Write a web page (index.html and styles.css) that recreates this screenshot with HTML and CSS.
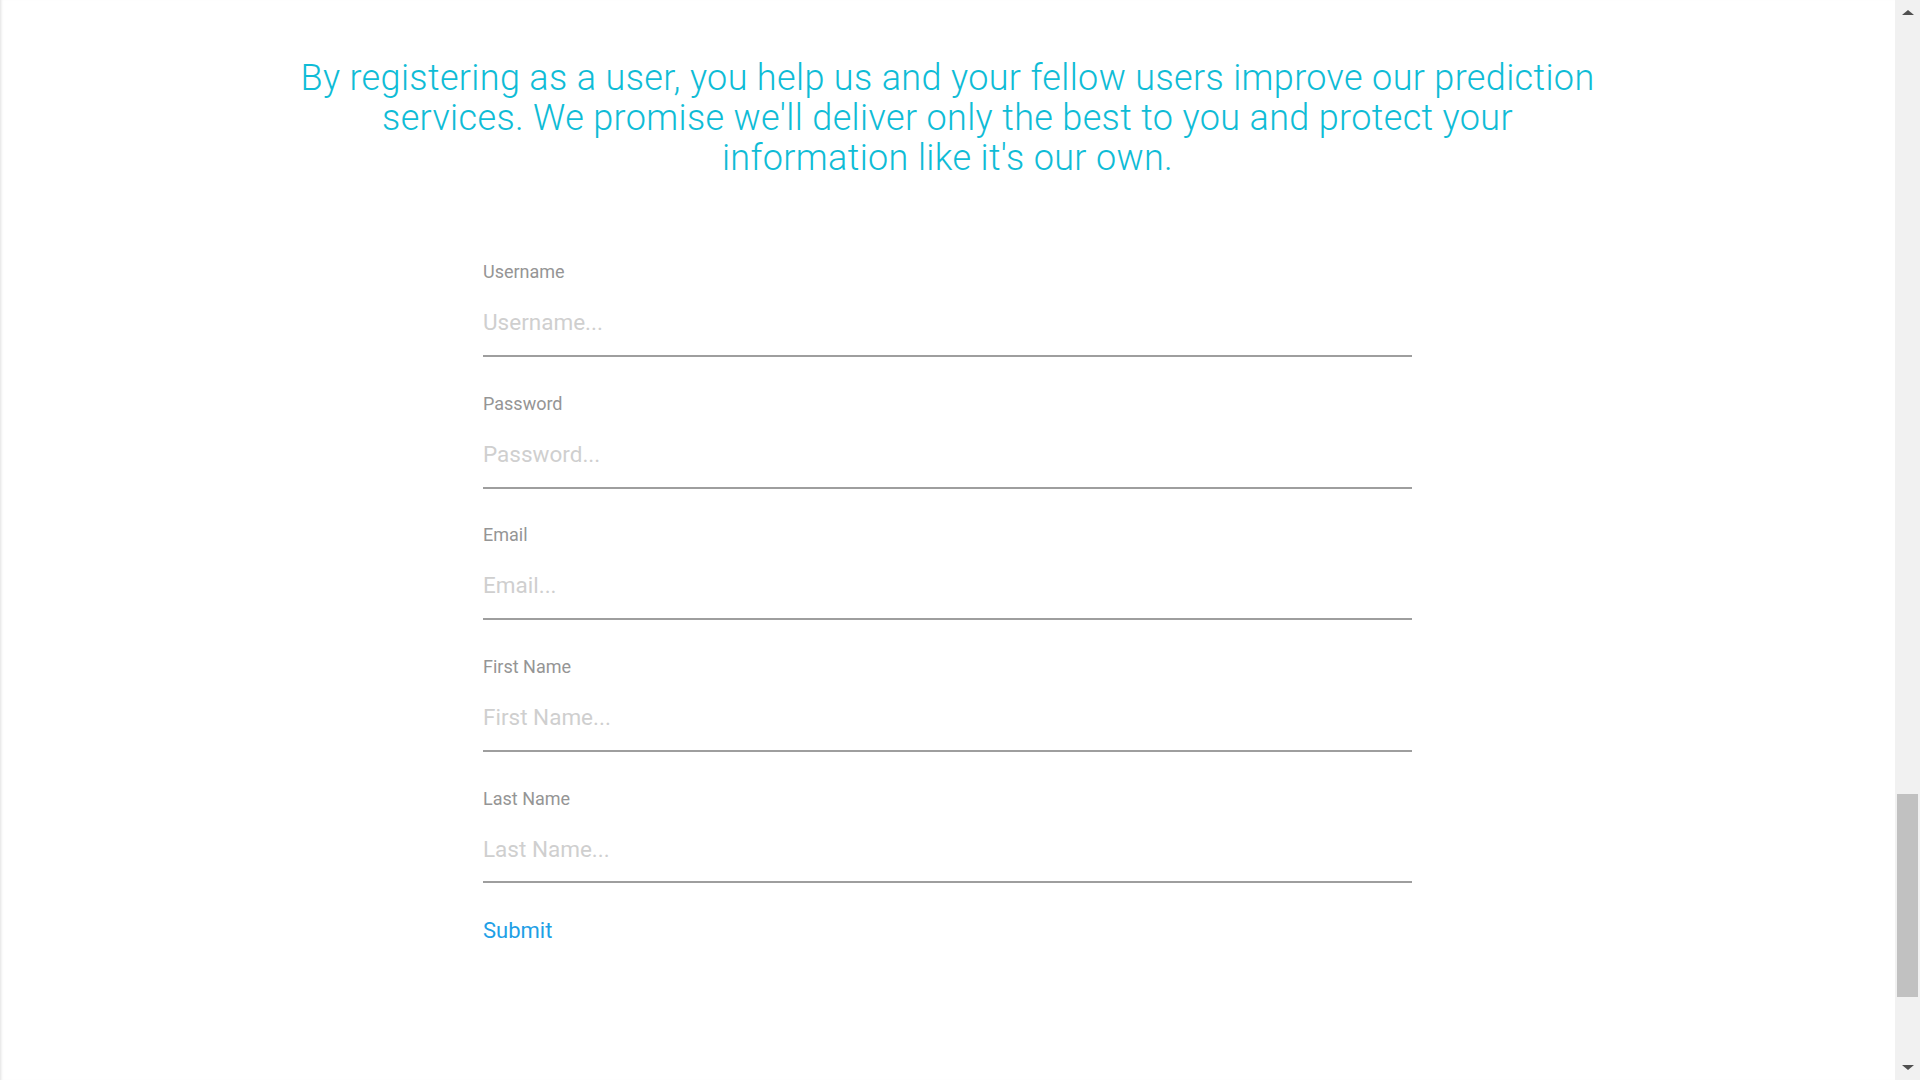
FILE: index.html
```html
<!DOCTYPE html>
<html lang="en">
<head>
<meta charset="utf-8">
<title>Register</title>
<link rel="stylesheet" href="styles.css">
</head>
<body>
<div class="page">
  <main class="main">
    <h1 class="intro">By registering as a user, you help us and your fellow users improve our prediction services. We promise we'll deliver only the best to you and protect your information like it's our own.</h1>
    <form class="form">
      <div class="field">
        <label class="label" for="username">Username</label>
        <input class="input" id="username" type="text" placeholder="Username...">
      </div>
      <div class="field">
        <label class="label" for="password">Password</label>
        <input class="input" id="password" type="password" placeholder="Password...">
      </div>
      <div class="field">
        <label class="label" for="email">Email</label>
        <input class="input" id="email" type="text" placeholder="Email...">
      </div>
      <div class="field">
        <label class="label" for="first">First Name</label>
        <input class="input" id="first" type="text" placeholder="First Name...">
      </div>
      <div class="field">
        <label class="label" for="last">Last Name</label>
        <input class="input" id="last" type="text" placeholder="Last Name...">
      </div>
      <button class="submit" type="button">Submit</button>
    </form>
  </main>
  <div class="scrollbar">
    <div class="arrow arrow-up"></div>
    <div class="track">
      <div class="thumb"></div>
    </div>
    <div class="arrow arrow-down"></div>
  </div>
</div>
</body>
</html>
```
FILE: styles.css
```css
html, body {
  margin: 0;
  padding: 0;
  height: 100%;
  overflow: hidden;
  background: #ffffff;
}

body {
  font-family: "Roboto", "Liberation Sans", sans-serif;
}

.page {
  display: flex;
  height: 1080px;
}

.main {
  flex: 1;
  min-width: 0;
  padding-top: 58px;
  box-shadow: inset 3px 0 3px -2px rgba(0, 0, 0, 0.12);
}

.intro {
  margin: 0 auto;
  max-width: 1298px;
  font-size: 36px;
  line-height: 40px;
  font-weight: 300;
  letter-spacing: 0.35px;
  color: #0fbcd6;
  text-align: center;
}

.form {
  width: 929px;
  margin: 0 auto;
  padding-top: 84.15px;
  display: flex;
  flex-direction: column;
  gap: 36.8px;
}

.field {
  display: flex;
  flex-direction: column;
}

.label {
  font-size: 18px;
  line-height: 20px;
  color: #959595;
}

.input {
  display: block;
  width: 100%;
  box-sizing: content-box;
  height: 26px;
  margin: 0;
  padding: 27px 0 19.8px;
  border: none;
  border-bottom: 2px solid #9e9e9e;
  outline: none;
  background: transparent;
  font-family: "Roboto", "Liberation Sans", sans-serif;
  font-size: 22.5px;
  line-height: 26px;
  color: #444;
}

.input::placeholder {
  color: #cfcfcf;
  opacity: 1;
}

.submit {
  align-self: flex-start;
  margin-top: -1.85px;
  padding: 0;
  border: none;
  background: none;
  font-family: "Roboto", "Liberation Sans", sans-serif;
  font-size: 22px;
  line-height: 26px;
  color: #1ea0e6;
  cursor: pointer;
}

.scrollbar {
  width: 25px;
  flex: none;
  background: #f1f1f1;
  display: flex;
  flex-direction: column;
  align-items: center;
}

.arrow {
  height: 25px;
  width: 25px;
  flex: none;
  display: flex;
  align-items: center;
  justify-content: center;
}

.arrow::before {
  content: "";
  width: 0;
  height: 0;
  border-left: 6px solid transparent;
  border-right: 6px solid transparent;
}

.arrow-up::before {
  border-bottom: 5px solid #505050;
}

.arrow-down::before {
  border-top: 5px solid #505050;
}

.track {
  flex: 1;
  width: 100%;
  display: flex;
  flex-direction: column;
  align-items: center;
  padding-top: 769px;
  box-sizing: border-box;
}

.thumb {
  width: 21px;
  height: 203px;
  background: #c1c1c1;
}
```
